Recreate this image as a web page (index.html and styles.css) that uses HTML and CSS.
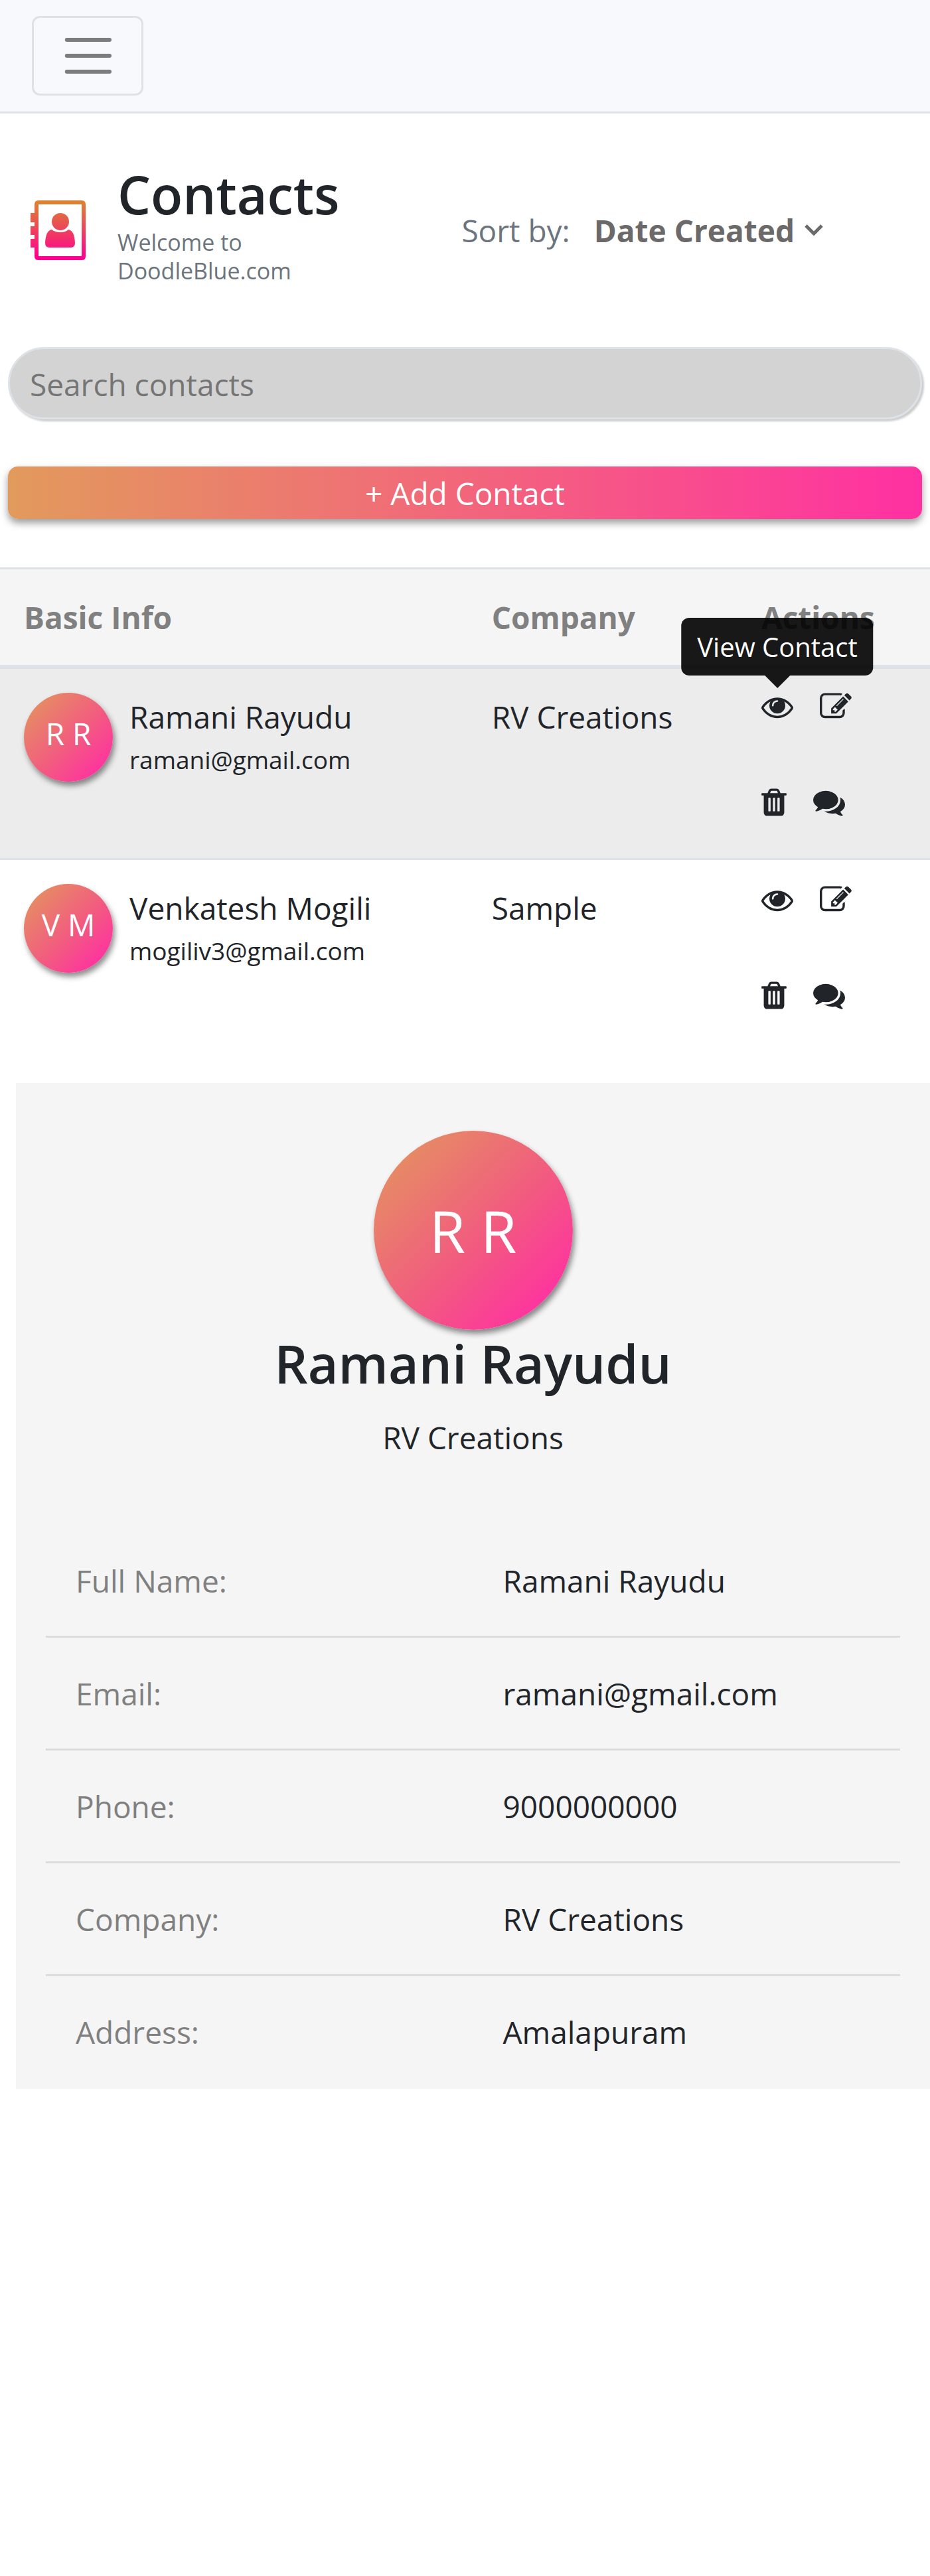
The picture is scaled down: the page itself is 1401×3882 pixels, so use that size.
FILE: index.html
```html
<!DOCTYPE html>
<html lang="en">
<head>
<meta charset="utf-8">
<meta name="viewport" content="width=device-width, initial-scale=1">
<title>Contacts</title>
<link rel="stylesheet" href="styles.css">
</head>
<body>
<svg class="sprite" aria-hidden="true">
  <symbol id="icon-eye" viewBox="0 0 1792 1792"><path d="M1664 960q-152-236-381-353 61 104 61 225 0 185-131.500 316.500t-316.500 131.500-316.500-131.500-131.500-316.500q0-121 61-225-229 117-381 353 133 205 333.500 326.500t434.500 121.500 434.500-121.500 333.500-326.500zm-720-384q0-20-14-34t-34-14q-125 0-214.500 89.500t-89.500 214.500q0 20 14 34t34 14 34-14 14-34q0-86 61-147t147-61q20 0 34-14t14-34zm848 384q0 34-20 69-140 230-376.500 368.500t-499.500 138.500-499.500-139-376.500-368q-20-35-20-69t20-69q140-229 376.500-368t499.500-139 499.500 139 376.500 368q20 35 20 69z"/></symbol>
  <symbol id="icon-edit" viewBox="0 0 1792 1792"><path d="M888 1184l116-116-152-152-116 116v56h96v96h56zm440-720q-16-16-33 1l-350 350q-17 17-1 33t33-1l350-350q17-17 1-33zm80 594v190q0 119-84.500 203.500t-203.500 84.500h-832q-119 0-203.500-84.500t-84.500-203.500v-832q0-119 84.500-203.500t203.500-84.500h832q63 0 117 25 15 7 18 23 3 17-9 29l-49 49q-14 14-32 8-23-6-45-6h-832q-66 0-113 47t-47 113v832q0 66 47 113t113 47h832q66 0 113-47t47-113v-126q0-13 9-22l64-64q15-15 35-7t20 29zm-96-738l288 288-672 672h-288v-288zm444 132l-92 92-288-288 92-92q28-28 68-28t68 28l152 152q28 28 28 68t-28 68z"/></symbol>
  <symbol id="icon-trash" viewBox="192 0 1408 1792"><path d="M704 1376v-704q0-14-9-23t-23-9h-64q-14 0-23 9t-9 23v704q0 14 9 23t23 9h64q14 0 23-9t9-23zm256 0v-704q0-14-9-23t-23-9h-64q-14 0-23 9t-9 23v704q0 14 9 23t23 9h64q14 0 23-9t9-23zm256 0v-704q0-14-9-23t-23-9h-64q-14 0-23 9t-9 23v704q0 14 9 23t23 9h64q14 0 23-9t9-23zm-544-992h448l-48-117q-7-9-17-11h-317q-10 2-17 11zm928 32v64q0 14-9 23t-23 9h-96v948q0 83-47 143.500t-113 60.500h-832q-66 0-113-58.500t-47-141.500v-952h-96q-14 0-23-9t-9-23v-64q0-14 9-23t23-9h309l70-167q15-37 54-63t79-26h320q40 0 79 26t54 63l70 167h309q14 0 23 9t9 23z"/></symbol>
  <symbol id="icon-comments" viewBox="0 0 1792 1792"><path d="M1408 768q0 139-94 257t-256.500 186.500-353.500 68.500q-86 0-176-16-124 88-278 128-36 9-86 16h-3q-11 0-20.500-8t-11.500-21q-1-3-1-6.500t.5-6.500 2-6l2.500-5 3.500-5.500 4-5 4.500-5 4-4.500q5-6 23-25t26-29.500 22.500-29 25-38.500 20.500-44q-124-72-195-177t-71-224q0-139 94-257t256.500-186.500 353.500-68.500 353.500 68.500 256.500 186.500 94 257zm384 256q0 120-71 224.500t-195 176.500q10 24 20.500 44t25 38.500 22.500 29 26 29.500 23 25q1 1 4 4.500t4.500 5 4 5 3.500 5.500l2.500 5 2 6 .5 6.500-1 6.500q-3 14-13 22t-22 7q-50-7-86-16-154-40-278-128-90 16-176 16-271 0-472-132 58 4 88 4 161 0 309-45t264-129q125-92 192-212t67-254q0-77-23-152 129 71 204 178t75 230z"/></symbol>
</svg>

<nav class="navbar">
  <button class="toggler" type="button" aria-label="Toggle navigation">
    <svg class="toggler-icon" viewBox="0 0 30 30" aria-hidden="true"><path d="M4.600 7h21.400M4.600 15h21.400M4.600 23h21.400" stroke="#7c7c7d" stroke-width="2" stroke-linecap="round"/></svg>
  </button>
</nav>

<main>
  <header class="hero">
    <svg class="brand-icon" viewBox="0 0 83 90" aria-hidden="true">
      <defs><linearGradient id="brand" x1="0" y1="0" x2="0" y2="90" gradientUnits="userSpaceOnUse"><stop offset="0" stop-color="#dc8531"/><stop offset=".4" stop-color="#e95152"/><stop offset=".95" stop-color="#ff0090"/></linearGradient></defs>
      <path fill="url(#brand)" fill-rule="evenodd" d="M12 0h65q6 0 6 6v78q0 6-6 6H12q-6 0-6-6V71H0V58h6v-6H0V39h6v-6H0V19h6V6q0-6 6-6zm1 6q-1 0-1 1v76q0 1 1 1h63q1 0 1-1V7q0-1-1-1z"/>
      <ellipse fill="url(#brand)" cx="45" cy="32" rx="13" ry="13"/>
      <path fill="url(#brand)" d="M32 44q5 4 13 4t12-4q9 1 10 20 0 7-6 7H28q-6 0-6-7 1-19 10-20z"/>
    </svg>
    <div class="hero-title">
      <h1 class="title">Contacts</h1>
      <p class="subtitle">Welcome to DoodleBlue.com</p>
    </div>
    <div class="sort">
      <label class="sort-label" for="sort">Sort by:</label>
      <select class="sort-select" id="sort"><option>Date Created</option></select>
      <svg class="sort-arrow" viewBox="0 0 28 18" aria-hidden="true"><path d="M2 2l12 12L26 2" fill="none" stroke="#6b6969" stroke-width="5"/></svg>
    </div>
  </header>

  <div class="controls">
    <input class="search" type="search" placeholder="Search contacts" aria-label="Search contacts">
    <button class="add" type="button">+ Add Contact</button>
  </div>

  <table class="contacts">
    <thead>
      <tr><th class="col-info" scope="col">Basic Info</th><th class="col-company" scope="col">Company</th><th scope="col">Actions</th></tr>
    </thead>
    <tbody>
      <tr class="contact selected">
        <td><div class="person"><span class="avatar">R R</span><div><div>Ramani Rayudu</div><div class="email">ramani@gmail.com</div></div></div></td>
        <td>RV Creations</td>
        <td class="actions-cell">
          <div class="actions">
            <button class="action" type="button" aria-label="View contact" aria-describedby="tip"><svg class="icon"><use href="#icon-eye"/></svg><span class="tooltip" id="tip" role="tooltip">View Contact</span></button>
            <button class="action" type="button" aria-label="Edit contact"><svg class="icon"><use href="#icon-edit"/></svg></button>
          </div>
          <div class="actions">
            <button class="action" type="button" aria-label="Delete contact"><svg class="icon icon-narrow"><use href="#icon-trash"/></svg></button>
            <button class="action" type="button" aria-label="Message contact"><svg class="icon"><use href="#icon-comments"/></svg></button>
          </div>
        </td>
      </tr>
      <tr class="contact">
        <td><div class="person"><span class="avatar">V M</span><div><div>Venkatesh Mogili</div><div class="email">mogiliv3@gmail.com</div></div></div></td>
        <td>Sample</td>
        <td>
          <div class="actions">
            <button class="action" type="button" aria-label="View contact"><svg class="icon"><use href="#icon-eye"/></svg></button>
            <button class="action" type="button" aria-label="Edit contact"><svg class="icon"><use href="#icon-edit"/></svg></button>
          </div>
          <div class="actions">
            <button class="action" type="button" aria-label="Delete contact"><svg class="icon icon-narrow"><use href="#icon-trash"/></svg></button>
            <button class="action" type="button" aria-label="Message contact"><svg class="icon"><use href="#icon-comments"/></svg></button>
          </div>
        </td>
      </tr>
    </tbody>
  </table>

  <section class="profile">
    <span class="avatar avatar-large">R R</span>
    <h2 class="title">Ramani Rayudu</h2>
    <p class="profile-company">RV Creations</p>
    <dl class="details">
      <div class="detail"><dt>Full Name:</dt><dd>Ramani Rayudu</dd></div>
      <div class="detail"><dt>Email:</dt><dd>ramani@gmail.com</dd></div>
      <div class="detail"><dt>Phone:</dt><dd>9000000000</dd></div>
      <div class="detail"><dt>Company:</dt><dd>RV Creations</dd></div>
      <div class="detail"><dt>Address:</dt><dd>Amalapuram</dd></div>
    </dl>
  </section>
</main>
</body>
</html>
```
FILE: styles.css
```css
* {
  box-sizing: border-box;
}

body {
  margin: 0;
  background: #fff;
  color: #212529;
  font: 46px/72px "Open Sans", "Noto Sans", sans-serif;
}

h1, h2, p, dl, dd {
  margin: 0;
}

button, input, select {
  font: inherit;
  color: inherit;
}

.sprite {
  display: none;
}

.navbar {
  padding: 24px 48px;
  background: #f8f9fc;
  border-bottom: 3px solid #dfe1e8;
}

.toggler {
  display: block;
  padding: 12px 36px;
  background: transparent;
  border: 3px solid #e0e1e3;
  border-radius: 12px;
}

.toggler-icon {
  display: block;
  width: 90px;
  height: 90px;
}

/* Page heading */
.hero {
  display: grid;
  grid-template-columns: 83px 2fr 3fr;
  column-gap: 48px;
  align-items: center;
  padding: 71px 0 0 46px;
}

.brand-icon {
  width: 83px;
  height: 90px;
}

.hero-title {
  padding-bottom: 22px;
}

.title {
  font-size: 79px;
  font-weight: 600;
  line-height: 102px;
}

.subtitle {
  max-width: 300px;
  color: #6c757d;
  font-size: 34px;
  line-height: 43px;
}

.sort {
  display: flex;
  align-items: center;
}

.sort-label {
  color: #6c757d;
}

.sort-select {
  margin-left: 36px;
  padding: 0;
  appearance: none;
  background: transparent;
  border: 0;
  color: #6b6969;
  font-weight: 700;
}

.sort-arrow {
  width: 28px;
  height: 18px;
  margin-left: 14px;
}

/* Search and add */
.controls {
  display: grid;
  row-gap: 71px;
  padding: 71px 12px 73px;
}

.search {
  width: 100%;
  height: 109px;
  padding: 3px 30px 0;
  appearance: none;
  background: #d3d3d3;
  border: 3px solid #dee2e6;
  border-radius: 55px;
  box-shadow: 3px 3px 3px rgba(0, 0, 0, .2);
}

.search::placeholder {
  color: #757575;
  opacity: 1;
}

.add {
  height: 79px;
  padding: 0;
  background: linear-gradient(to right, #e29a5c, #f2667b 50%, #ff30a2);
  border: 0;
  border-radius: 15px;
  box-shadow: 0 6px 12px rgba(0, 0, 0, .4);
  color: #fff;
}

/* Contact list */
.contacts {
  width: 100%;
  border-spacing: 0;
  table-layout: fixed;
}

.col-info {
  width: 50.3%;
}

.col-company {
  width: 29%;
}

.contacts th {
  padding: 36px;
  background: #f5f5f5;
  border-top: 3px solid #dee2e6;
  border-bottom: 6px solid #dee2e6;
  color: #808080;
  font-weight: 700;
  text-align: left;
}

.contacts td {
  padding: 36px 36px 57px;
  vertical-align: top;
}

.selected td {
  background: #ececec;
}

.contact + .contact td {
  border-top: 3px solid #dee2e6;
}

.person {
  display: flex;
  gap: 25px;
}

.avatar {
  display: flex;
  flex: none;
  align-items: center;
  justify-content: center;
  width: 134px;
  height: 134px;
  padding-bottom: 13px;
  background: linear-gradient(135deg, #e29a5c, #f25a80 55%, #ff30a2 90%);
  border-radius: 50%;
  box-shadow: 3px 6px 9px rgba(0, 0, 0, .45);
  color: #fff;
}

.email {
  font-size: 37px;
  line-height: 58px;
}

.contacts .actions-cell {
  padding-top: 33px;
  padding-bottom: 60px;
}

.actions {
  display: flex;
  gap: 40px;
}

.actions + .actions {
  margin-top: 96px;
}

.action {
  position: relative;
  padding: 0;
  background: transparent;
  border: 0;
}

.icon {
  display: block;
  width: 48px;
  height: 48px;
  fill: currentColor;
}

.icon-narrow {
  width: 38px;
}

.tooltip {
  position: absolute;
  bottom: 71px;
  left: 50%;
  padding: 12px 24px;
  transform: translateX(-50%);
  background: rgba(0, 0, 0, .9);
  border-radius: 12px;
  color: #fff;
  font-size: 40px;
  line-height: 63px;
  white-space: nowrap;
}

.tooltip::after {
  position: absolute;
  top: 100%;
  left: 50%;
  border: 19px solid transparent;
  border-top-color: rgba(0, 0, 0, .9);
  border-bottom: 0;
  transform: translateX(-50%);
  content: "";
}

/* Selected contact */
.profile {
  display: flex;
  flex-direction: column;
  align-items: center;
  margin: 51px 0 0 24px;
  padding: 72px 45px 0;
  background: #f5f5f5;
}

.avatar-large {
  width: 300px;
  height: 300px;
  padding: 0;
  font-size: 88px;
}

.profile-company {
  margin: 24px 0 96px;
}

.details {
  width: 100%;
}

.detail {
  display: grid;
  grid-template-columns: 1fr 1fr;
  padding: 48px 0 47px;
  border-bottom: 3px solid #dcdcdc;
}

.detail:last-child {
  border-color: transparent;
}

.detail dt {
  padding-left: 45px;
  color: #808080;
}

.detail dd {
  padding-left: 45px;
}
```
